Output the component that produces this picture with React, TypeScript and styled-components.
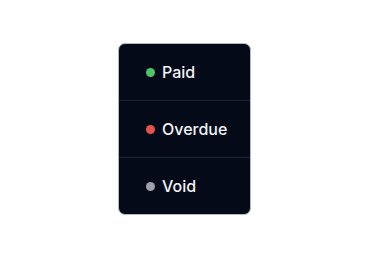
import React from "react";
import styled, { createGlobalStyle } from "styled-components";

const GlobalStyle = createGlobalStyle`
  html, body {
    margin: 0;
    padding: 0;
    background: #ffffff;
  }
  body {
    font-family: Inter, "Noto Sans", "Liberation Sans", sans-serif;
  }
`;

type Status = "paid" | "overdue" | "void";

const statuses: { key: Status; label: string }[] = [
  { key: "paid", label: "Paid" },
  { key: "overdue", label: "Overdue" },
  { key: "void", label: "Void" },
];

const dotColors: Record<Status, string> = {
  paid: "#4fc46b",
  overdue: "#e5534b",
  void: "#9ca0aa",
};

export default function App() {
  return (
    <>
      <GlobalStyle />
      <Page>
        <Menu role="listbox" aria-label="Status">
          {statuses.map((s) => (
            <Option key={s.key} role="option">
              <Dot $status={s.key} />
              <span>{s.label}</span>
            </Option>
          ))}
        </Menu>
      </Page>
    </>
  );
}

const Page = styled.div`
  display: flex;
  justify-content: flex-start;
  width: 369px;
  height: 260px;
  padding: 43px 0 0 118px;
  box-sizing: border-box;
`;

const Menu = styled.div`
  display: flex;
  flex-direction: column;
  width: 133px;
  height: 172px;
  box-sizing: border-box;
  border: 1px solid #b4b8c1;
  border-radius: 7px;
  background: #050a18;
  overflow: hidden;
`;

const Option = styled.div`
  display: flex;
  align-items: center;
  gap: 7px;
  flex: 1;
  padding-left: 27px;
  color: #f1f3f7;
  font-size: 16px;
  font-weight: 450;
  letter-spacing: 0;

  & + & {
    border-top: 1px solid #1f2434;
  }
`;

const Dot = styled.span<{ $status: Status }>`
  width: 9px;
  height: 9px;
  border-radius: 50%;
  background: ${(p) => dotColors[p.$status]};
  flex-shrink: 0;
`;
